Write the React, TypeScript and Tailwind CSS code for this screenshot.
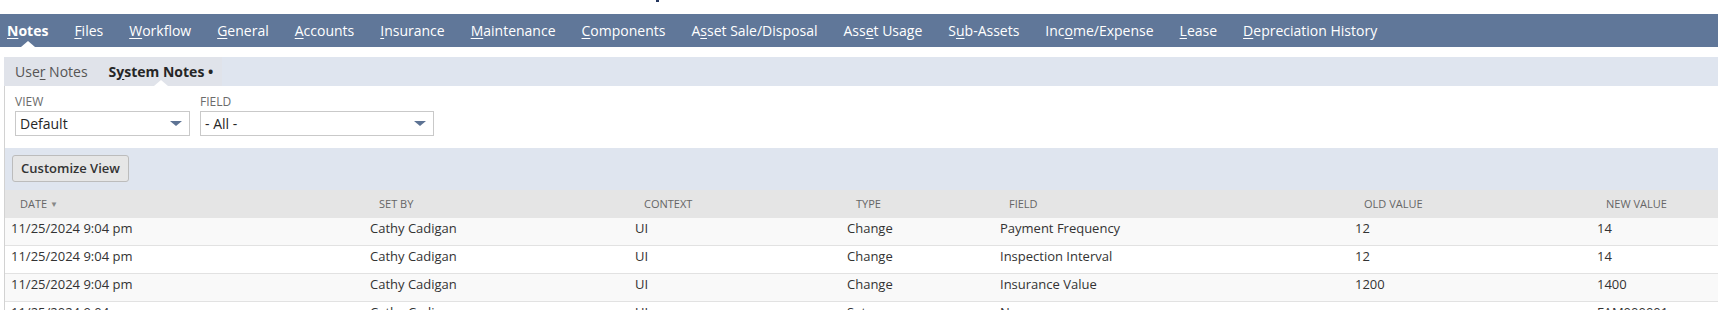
import React from "react"

type NavItem = [string, string, string]

const navItems: NavItem[] = [
    ["", "N", "otes"],
    ["", "F", "iles"],
    ["", "W", "orkflow"],
    ["", "G", "eneral"],
    ["", "A", "ccounts"],
    ["", "I", "nsurance"],
    ["", "M", "aintenance"],
    ["", "C", "omponents"],
    ["A", "s", "set Sale/Disposal"],
    ["Ass", "e", "t Usage"],
    ["S", "u", "b-Assets"],
    ["Inc", "o", "me/Expense"],
    ["", "L", "ease"],
    ["", "D", "epreciation History"],
]

const columns = ["Date", "Set By", "Context", "Type", "Field", "Old Value", "New Value"]

const rows = [
    ["11/25/2024 9:04 pm", "Cathy Cadigan", "UI", "Change", "Payment Frequency", "12", "14"],
    ["11/25/2024 9:04 pm", "Cathy Cadigan", "UI", "Change", "Inspection Interval", "12", "14"],
    ["11/25/2024 9:04 pm", "Cathy Cadigan", "UI", "Change", "Insurance Value", "1200", "1400"],
    ["11/25/2024 9:04 pm", "Cathy Cadigan", "UI", "Set", "Name", "", "FAM000001"],
]

const grid = "grid grid-cols-[359px_265px_212px_153px_355px_242px_1fr]"

function UpTriangle() {
    return (
        <span className="absolute bottom-0 left-1/2 -translate-x-1/2 w-0 h-0 border-l-[7px] border-r-[7px] border-b-[6px] border-l-transparent border-r-transparent border-b-white" />
    )
}

function Select({ value, width }: { value: string; width: string }) {
    return (
        <div className={`${width} h-[25px] border border-[#c9c9c9] bg-white flex items-center justify-between pl-[4px] pr-[7px] text-[14px] text-[#262626]`}>
            <span>{value}</span>
            <span className="w-0 h-0 border-l-[6px] border-r-[6px] border-t-[5px] border-l-transparent border-r-transparent border-t-[#5d7394]" />
        </div>
    )
}

export default function App() {
    return (
        <div className="w-[1718px] h-[310px] overflow-hidden bg-white font-['Open_Sans',sans-serif]">
            {/* cut-off text from the page title above */}
            <div className="h-[14px] pl-[656px]">
                <div className="w-[3px] h-[2px] bg-[#24365e]" />
            </div>

            <nav className="h-[33px] bg-[#607799] flex items-stretch pl-[7px] gap-[26px] text-[14px] text-white">
                {navItems.map(([pre, u, post], i) => (
                    <div key={i} className={`relative flex items-center ${i === 0 ? "font-bold" : ""}`}>
                        <span>
                            {pre}
                            <span className="underline underline-offset-2">{u}</span>
                            {post}
                        </span>
                        {i === 0 && <UpTriangle />}
                    </div>
                ))}
            </nav>

            <div className="h-[10px]" />

            <div className="ml-[4px]">
                <div className="h-[29px] bg-[#dfe5ef] flex">
                    <div className="w-[218px] bg-[#e0e3ea] flex items-stretch pl-[11px] gap-[21px] text-[14px]">
                        <div className="flex items-center text-[#555]">
                            <span>
                                Use<span className="underline underline-offset-2">r</span> Notes
                            </span>
                        </div>
                        <div className="relative flex items-center font-bold text-[#262626]">
                            <span>
                                S<span className="underline underline-offset-2">y</span>stem Notes •
                            </span>
                            <UpTriangle />
                        </div>
                    </div>
                </div>

                <div className="border-l border-[#d2d2d2]">
                    <div className="h-[62px] bg-white flex gap-[10px] pl-[10px] pt-[9px]">
                        <div>
                            <div className="h-[14px] leading-[14px] text-[12px] text-[#6b6b6b]">VIEW</div>
                            <div className="mt-[2px]">
                                <Select value="Default" width="w-[175px]" />
                            </div>
                        </div>
                        <div>
                            <div className="h-[14px] leading-[14px] text-[12px] text-[#6b6b6b]">FIELD</div>
                            <div className="mt-[2px]">
                                <Select value="- All -" width="w-[234px]" />
                            </div>
                        </div>
                    </div>

                    <div className="h-[42px] bg-[#dfe5ef] pl-[7px] pt-[7px]">
                        <button className="h-[27px] w-[117px] border border-[#bcbcbc] bg-[#e6e6e6] rounded-[3px] text-[13px] font-semibold text-[#333]">
                            Customize View
                        </button>
                    </div>

                    <div className={`${grid} h-[28px] bg-[#e5e5e5] items-center text-[11px] text-[#666] uppercase`}>
                        {columns.map((c, i) => (
                            <div key={c} className="pl-[15px] flex items-center gap-[3px]">
                                <span>{c}</span>
                                {i === 0 && <span className="text-[8px] text-[#888]">▼</span>}
                            </div>
                        ))}
                    </div>

                    {rows.map((r, ri) => (
                        <div
                            key={ri}
                            className={`${grid} h-[28px] pb-[5px] items-center border-b border-[#e2e2e2] text-[13px] text-[#333] ${ri % 2 === 0 ? "bg-[#f9f9f9]" : "bg-white"}`}
                        >
                            {r.map((cell, ci) => (
                                <div key={ci} className="pl-[6px] whitespace-nowrap">
                                    {cell}
                                </div>
                            ))}
                        </div>
                    ))}
                </div>
            </div>
        </div>
    )
}
